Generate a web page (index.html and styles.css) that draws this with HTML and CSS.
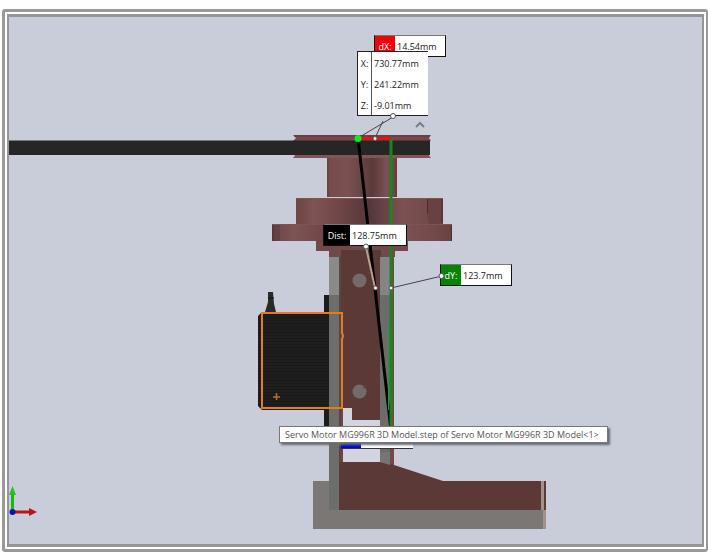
FILE: index.html
```html
<!DOCTYPE html>
<html lang="en">
<head>
<meta charset="utf-8">
<title>Assembly measurement</title>
<link rel="stylesheet" href="styles.css">
</head>
<body>
<main class="frame">
<div class="viewport">
<svg class="model" viewBox="9 17 693 527" width="693" height="527" aria-hidden="true">
<defs>
<linearGradient id="hub"><stop offset="0" stop-color="#744b4c"/><stop offset=".3" stop-color="#7b5051"/><stop offset=".65" stop-color="#5a3a39"/><stop offset=".85" stop-color="#7b5152"/><stop offset="1" stop-color="#68403f"/></linearGradient>
<linearGradient id="disc"><stop offset="0" stop-color="#6d4545"/><stop offset=".12" stop-color="#7e5354"/><stop offset=".25" stop-color="#75494a"/><stop offset=".5" stop-color="#55373a"/><stop offset=".72" stop-color="#7b5152"/><stop offset=".88" stop-color="#754b4c"/><stop offset="1" stop-color="#694142"/></linearGradient>
<pattern id="ribs" width="4" height="3" patternUnits="userSpaceOnUse"><path d="M0 0h4v3H0z" fill="#191919"/><path d="M0 1h4" stroke="#222"/></pattern>
</defs>
<path d="M293 135h138l-2 3 2 3H293l3-3z" fill="#75494b"/>
<path d="M294 136h136" stroke="#64393b"/>
<path d="M293 158l3-4h132l3 4z" fill="#805556"/>
<path d="M9 140.500h421V155H9z" fill="#262626"/>
<path d="M327 158h70v39h-70z" fill="url(#hub)"/>
<path d="M328 158v39M396 158v39" stroke="#603b3b"/>
<path d="M296 198h147v26H296z" fill="url(#disc)"/>
<path d="M427 198h16v26h-14l-2-10z" fill="#6a4142"/><path d="M427.500 199v14M442 198v25" stroke="#4d2c2d"/>
<path d="M272 224h180v17H272z" fill="url(#disc)"/>
<path d="M272 224h8v17h-8z" fill="#644142"/><path d="M273 224v17M451.500 224v17" stroke="#513031"/>
<path d="M296 198.500h147M272 224.500h180" stroke="#7d5454"/>
<path d="M316 241h92v10h-13v6h-66v-6h-13z" fill="#73484a"/>
<path d="M324 295h8v131h-8z" fill="#1b1d1d"/>
<path d="M268 292h5l1 12 2 8h-11l3-10z" fill="#292a2a"/><path d="M268 298h6" stroke="#111"/>
<path d="M262 312h70v98h-70l-4-4v-90z" fill="url(#ribs)"/>
<path d="M341 250h40v170h-29v-12h-11z" fill="#5b3937"/>
<path d="M329 257h11v38h-11z" fill="#8b8a8a"/><path d="M329 295h11v216h-11z" fill="#6d6e6c"/>
<path d="M340 257v205" stroke="#594544" stroke-width="2"/>
<path d="M342.500 314v94" stroke="#9a6865"/>
<path d="M341 408h2v54h-2z" fill="#754347"/>
<path d="M343 408h9v12h28v42h-37z" fill="#d2d5df"/>
<path d="M380 257h10v38h-10z" fill="#858484"/><path d="M380 295h10v170h-10z" fill="#6d6c6a"/>
<path d="M390 251h4v214h-4z" fill="#774645"/>
<circle cx="359.500" cy="280.500" r="7" fill="#716c69"/>
<circle cx="359.500" cy="391.500" r="7" fill="#716c69"/>
<path d="M363 388l4-1" stroke="#5b3937"/>
<path d="M313 481h233v48H313z" fill="#7b7774"/>
<path d="M329 462h11v48h-11z" fill="#6c6e6b"/>
<path d="M339 462h41l14 3 49 16h103v29H339z" fill="#5b3937"/>
<path d="M380 462v-10h10v13z" fill="#777574"/>
<path d="M541 481h3v29h-3zM543 510h3v19h-3z" fill="#a29389"/>
<path d="M358 138L391 430" stroke="#000" stroke-width="3"/>
<path d="M391 138V430" stroke="#168720" stroke-width="3"/>
<path d="M388.500 325V410" stroke="#23992e"/>
<path d="M358 138.500h33" stroke="#e81114" stroke-width="3"/>
<path d="M262 313h80v20q2 3 0 6v69h-80z" fill="none" stroke="#e87c12" stroke-width="2"/>
<path d="M273 397h7M276.500 393v7" stroke="#c76b1c" stroke-width="1.500"/>
<path d="M416 127l4-4 4 4" fill="none" stroke="#7b7d85" stroke-width="2"/>
<path d="M12.500 512v-18" stroke="#10bd18" stroke-width="3"/><path d="M12.500 486l3.500 9h-7z" fill="#20c41d"/>
<path d="M13 512h17" stroke="#bd1318" stroke-width="3"/><path d="M29 508l8 4-8 4z" fill="#bd1318"/>
<circle cx="12.500" cy="512" r="3" fill="#0815af"/>
</svg>

<div class="label label-dx"><span class="key">dX:</span><span class="value">14.54mm</span></div>
<div class="label label-dist"><span class="key">Dist:</span><span class="value">128.75mm</span></div>
<div class="label label-dy"><span class="key">dY:</span><span class="value">123.7mm</span></div>
<div class="label-dz"></div>
<dl class="coords">
<dt>X:</dt><dd>730.77mm</dd>
<dt>Y:</dt><dd>241.22mm</dd>
<dt>Z:</dt><dd>-9.01mm</dd>
</dl>

<svg class="model leaders" viewBox="9 17 693 527" width="693" height="527" aria-hidden="true">
<g fill="none" stroke="#444"><path d="M358 138L393 117M375 138l8-17"/><path d="M391 288L442 276"/></g>
<path d="M366 247L375 288" fill="none" stroke="#b6a09b" stroke-width="2"/>
<g fill="#fff" stroke="#555"><circle cx="393" cy="116" r="2.500"/><circle cx="375" cy="138.500" r="2"/><circle cx="366" cy="246.500" r="2.500"/><circle cx="375.500" cy="288" r="2"/><circle cx="391" cy="288" r="2"/><circle cx="441.500" cy="276" r="2.500"/></g>
<circle cx="358" cy="138.500" r="3.500" fill="#0bec24"/>
</svg>
<div class="tooltip" role="tooltip">Servo Motor MG996R 3D Model.step of Servo Motor MG996R 3D Model&lt;1&gt;</div>
</div>
</main>
</body>
</html>
```
FILE: styles.css
```css
* {
  box-sizing: border-box;
}

body {
  margin: 0;
  min-height: 100vh;
  display: flex;
  padding: 9px 0 1px 2px;
  background: #fff;
  font-family: "Open Sans", "Noto Sans", sans-serif;
  font-size: 9px;
  color: #222;
}

.frame {
  flex: 1;
  display: flex;
  padding: 2px;
  border: 3px solid #999;
  border-right-width: 2px;
  border-radius: 3px;
}

.viewport {
  position: relative;
  flex: 1;
  overflow: hidden;
  border: 3px solid #959595;
  border-left-width: 2px;
  border-right-width: 2px;
  background: #c9cdd9;
}

.model {
  display: block;
}

.leaders {
  position: absolute;
  top: 0;
  left: 0;
}

.label {
  position: absolute;
  display: flex;
  height: 22px;
  border: 1px solid #111;
  border-top-color: #777;
  background: #fff;
  line-height: 22px;
}

.key {
  color: #fff;
  text-align: center;
}

.value {
  padding-left: 2px;
}

.label-dx {
  left: 365px;
  top: 18px;
  width: 72px;
}

.label-dx .key {
  width: 20px;
  background: #f00505;
}

.label-dist {
  left: 314px;
  top: 207px;
  width: 84px;
}

.label-dist .key {
  width: 26px;
  background: #000;
}

.label-dy {
  left: 431px;
  top: 247px;
  width: 72px;
}

.label-dy .key {
  width: 20px;
  background: #078407;
}

.label-dz {
  position: absolute;
  left: 332px;
  top: 411px;
  width: 72px;
  height: 21px;
  border-bottom: 1px solid #333;
  background: linear-gradient(to right, #0505e8 20px, #fff 20px);
}

.coords {
  position: absolute;
  left: 348px;
  top: 34px;
  width: 71px;
  margin: 0;
  display: grid;
  grid-template-columns: 14px 1fr;
  grid-auto-rows: 21px;
  border: 1px solid #222;
  border-right: 0;
  background: #fff;
  line-height: 23px;
}

.coords dt {
  border-right: 1px solid #555;
  text-align: center;
}

.coords dd {
  margin: 0;
  padding-left: 2px;
}

.tooltip {
  position: absolute;
  left: 270px;
  top: 409px;
  height: 17px;
  padding: 0 8px 0 5px;
  border: 1px solid #777;
  background: #fff;
  box-shadow: 2px 2px 2px #676b73;
  color: #555;
  line-height: 15px;
  white-space: nowrap;
}
```
